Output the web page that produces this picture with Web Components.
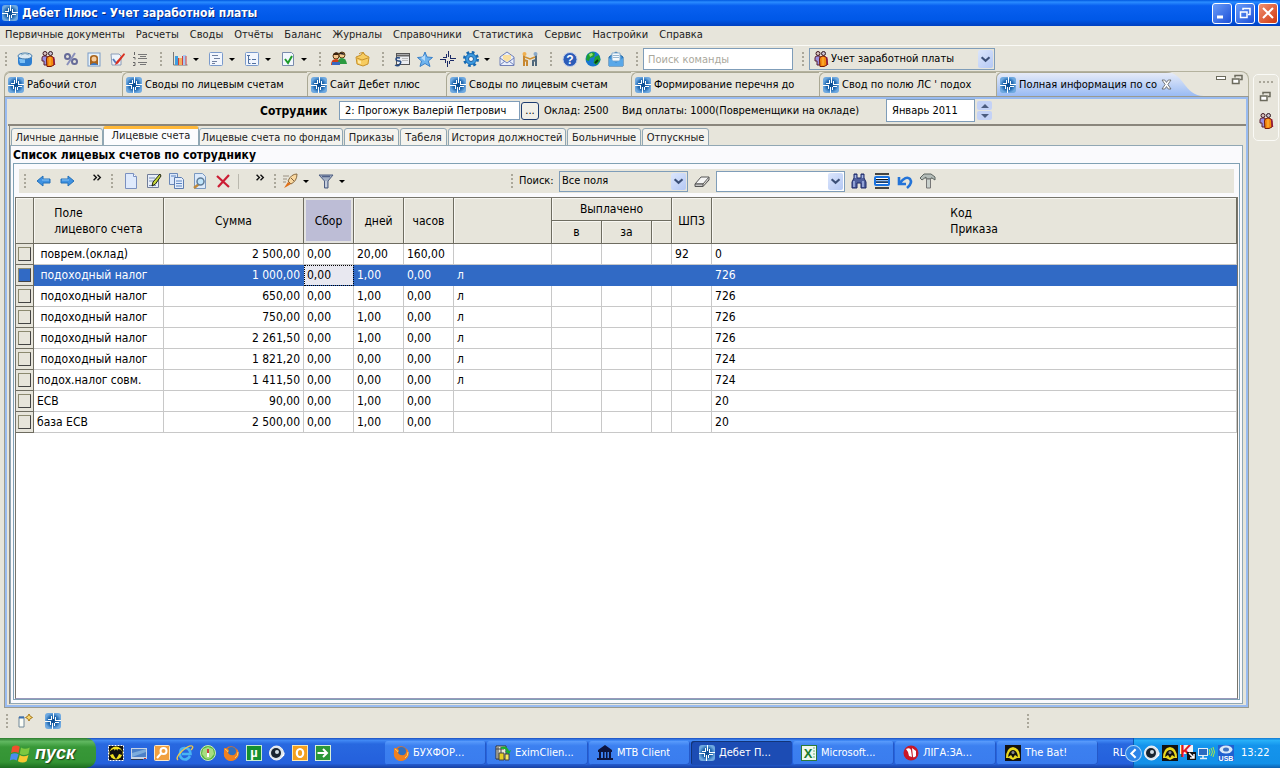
<!DOCTYPE html>
<html lang="ru">
<head>
<meta charset="utf-8">
<title>Дебет Плюс - Учет заработной платы</title>
<style>
  html, body { margin: 0; height: 100%; }
  body {
    --face: #e7e5db; --line: #7f9db9; --sel: #316ac5;
    font: 11px/14px "DejaVu Sans Condensed", "Noto Sans", sans-serif;
    color: #000; background: var(--face);
  }
</style>
</head>
<body>
<payroll-app></payroll-app>
<script>
const ICONS = {
  logo: '<defs><radialGradient id="g"><stop offset="0" stop-color="#0c4a8c"/><stop offset=".6" stop-color="#1f68b0"/><stop offset="1" stop-color="#6fa9e0"/></radialGradient></defs><rect width="16" height="16" rx="3" fill="url(#g)"/><path d="M0 8.5h6M3 6.5h4M6.5 3v4M8.5 0v6M10.5 4v4M10 7.5h6M10 9.5h4M9.5 10v3M7.5 10v6M5.5 9v3" stroke="#fff" fill="none"/>',
  mark: '<path d="M0 8.5h6M3 6.5h4M6.5 3v4M8.5 0v6M10.5 4v4M10 7.5h6M10 9.5h4M9.5 10v3M7.5 10v6M5.5 9v3" stroke="#1c2b66" fill="none"/>',
  jar: '<path d="M1 6h14v5q0 4-4 4H5q-4 0-4-4z" fill="#2d7fd2"/><path d="M2 8h6v4H3z" fill="#7cc0f5"/><ellipse cx="8" cy="5" rx="7" ry="3" fill="#dce9f2" stroke="#4a7fae"/><path d="M4 4q4-3 8 0" stroke="#8eb0c4" fill="none"/>',
  people: '<circle cx="5" cy="2.500" r="2" fill="#d8c4c0" stroke="#401820"/><circle cx="10.500" cy="2.500" r="2" fill="#c8c0d0" stroke="#301820"/><path d="M2 7q0-2 2-2h3v9H4v-4H2z" fill="#9a8ee0" stroke="#5a2030"/><path d="M6.500 8q0-3 3.500-3t4 3v6l-3 1.500H7z" fill="#f58a10" stroke="#7a1a08"/><path d="M13.500 6l1 8" stroke="#901840" stroke-width="1.500"/><path d="M10 6v8" stroke="#ffc040"/>',
  percent: '<circle cx="4.500" cy="5.500" r="2.500" fill="none" stroke="#666b98" stroke-width="2"/><circle cx="11.500" cy="10.500" r="2.500" fill="none" stroke="#666b98" stroke-width="2"/><path d="M12 2L4 14" stroke="#8a90bc" stroke-width="2"/>',
  photo: '<rect x="2" y="2" width="12" height="13" fill="#e8f3fb" stroke="#7a9cc8"/><path d="M4 14V7q0-3 4-3t4 3v7z" fill="#a8631c"/><circle cx="8" cy="8" r="2.500" fill="#f5cda0"/><path d="M4 14q4-4 8 0z" fill="#3878c8"/>',
  edit: '<path d="M2 3h8l2 2v9H3z" fill="#eef4fb" stroke="#8a9cb8"/><path d="M4 8l3 4" stroke="#5a7ab8" stroke-width="2"/><path d="M15 2L7 11l-1 3 3-1.500 7-9z" fill="#d83020"/>',
  numlist: '<path d="M6 3.500h9M6 7.500h9M6 11.500h9M8 5.500h6M8 13.500h6" stroke="#777"/><path d="M2.500 1v3M1 6.500h2v2M1 11.500h2v3H1" stroke="#666" fill="none"/>',
  chart: '<path d="M1.500 1v13h14" stroke="#777" fill="none"/><rect x="3" y="5" width="3" height="9" fill="#3f9fe0"/><rect x="7" y="7" width="3" height="7" fill="#f0b060"/><rect x="11" y="4" width="3" height="10" fill="#a8c8f0"/><path d="M6.500 7v7M10.500 5v9M14 5v9" stroke="#d04040"/>',
  form: '<rect x="1.500" y="1.500" width="13" height="13" rx="1" fill="#f2f6fd" stroke="#7a9acc"/><path d="M4 4.500h6M6 7.500h6M4 10.500h5M4 12.500h3" stroke="#7080a0"/>',
  tree: '<rect x="1.500" y="1.500" width="13" height="13" rx="1" fill="#f2f6fd" stroke="#7a9acc"/><path d="M3 4.500h3M8 8.500h4M8 12.500h4M4.500 5v7.500M4.500 8.500h2M4.500 12.500h2" stroke="#5070a0" fill="none"/>',
  check: '<path d="M2.500 1.500h9l2 2v11h-11z" fill="#f2f7fd" stroke="#7a8cac"/><path d="M5 8l3 4 4-7" stroke="#1d9a28" stroke-width="2" fill="none"/>',
  users: '<circle cx="5" cy="5" r="3" fill="#f3c68e" stroke="#5a3a10"/><path d="M2 4q1-4 6-2l-1 2z" fill="#3c2410"/><path d="M0 14q0-6 5-6t4 6z" fill="#d04018"/><circle cx="11" cy="4" r="3" fill="#f5cd90" stroke="#604010"/><path d="M8 3q3-4 6 1z" fill="#2c2020"/><path d="M7 12q0-5 4-5t5 6H7z" fill="#2c9a40"/><path d="M1 11h8v3H1z" fill="#3868c0"/>',
  bag: '<path d="M2 6l5-2 2-3 2 3 4 2-1 7-5 2-6-2z" fill="#f7cc60" stroke="#c8922c"/><path d="M3 7l5 2 6-2M5 3q3-3 6 1" stroke="#c8922c" fill="none"/><path d="M4 9l3 1v3l-3-1z" fill="#fde8a8"/>',
  console: '<rect x="2.500" y="2.500" width="13" height="11" fill="#eceef2" stroke="#555"/><path d="M3 4.500h12" stroke="#666" stroke-width="2"/><path d="M6 7q-4-1-4 1t3 2 1 3-5 1" stroke="#264a80" stroke-width="1.500" fill="none"/><path d="M8 7.500h6M8 9.500h6" stroke="#bbb"/>',
  star: '<path d="M8 1l2 5 5.500.5-4.200 3.500 1.700 5.500-5-3-5 3 1.500-5.500L.5 6.500 6 6z" fill="#6fb4ee" stroke="#3a80c8"/><path d="M8 4v6L4 7z" fill="#b8dcfa"/>',
  gear: '<circle cx="8" cy="8" r="6.500" fill="none" stroke="#1668b0" stroke-width="3" stroke-dasharray="2.600 2.500"/><circle cx="8" cy="8" r="5.500" fill="#3c9ae0" stroke="#1e70b8"/><circle cx="8" cy="8" r="2.500" fill="#f4f6f8" stroke="#1e60a0"/>',
  mail: '<path d="M1 6l7-5 7 5v8.500H1z" fill="#e9effc" stroke="#7080b8"/><path d="M4 4h8v4l-4 3-4-3z" fill="#fae0a0"/><path d="M1 7l7 5 7-5M1 14l5-4M15 14l-5-4" stroke="#7080b8" fill="none"/>',
  shake: '<path d="M2 4v11M2 9l3 1v5" stroke="#c88830" stroke-width="2" fill="none"/><circle cx="2.500" cy="3" r="2" fill="#f0b050"/><path d="M14 4v11M14 9l-3 1v5" stroke="#50687c" stroke-width="2" fill="none"/><circle cx="13.500" cy="3" r="2" fill="#88a8c8"/><path d="M3 6l5 2 5-2" stroke="#d09030" stroke-width="1.500" fill="none"/>',
  help: '<circle cx="8" cy="8.500" r="7" fill="#2c5cb8" stroke="#c0cce8"/><text x="8" y="13" text-anchor="middle" font-size="12" font-weight="bold" fill="#fff" font-family="Liberation Sans">?</text>',
  globe: '<circle cx="8" cy="8" r="7.500" fill="#1878d0"/><path d="M2 4q4-4 8-2l-1 4-4 1-1 3-3-1zM10 6l4-2 1.500 5-4 5-3-2z" fill="#1da030"/><path d="M4 3l3-1 1 2-3 2z" fill="#98e070"/><path d="M10 12l3-3" stroke="#0a3c10" stroke-width="2"/>',
  mailopen: '<path d="M1 6l7-5 7 5v9H1z" fill="#3c90d8" stroke="#2068a8"/><path d="M4 2h8v8H4z" fill="#f6fafd" stroke="#8ab0d0"/><path d="M5 4.500h6M5 6.500h6" stroke="#9ab8d0"/><path d="M1 7l7 5 7-5v8H1z" fill="#5aa8e8"/>',
  left: '<path d="M1 8l6-5v3h7v4H7v3z" fill="#3f92e2" stroke="#2470b8"/><path d="M6 7h7" stroke="#8cc4f4"/>',
  right: '<path d="M15 8L9 3v3H2v4h7v3z" fill="#3f92e2" stroke="#2470b8"/><path d="M3 7h7" stroke="#8cc4f4"/>',
  chev: '<path d="M1 3l5 5-5 5M8 3l5 5-5 5" stroke="#111" stroke-width="2.500" fill="none"/>',
  doc: '<path d="M2.500.5h8l3 3v12h-11z" fill="#dfeafc" stroke="#7a90c0"/><path d="M10.500.5v3h3" fill="#fff" stroke="#7a90c0"/>',
  docedit: '<path d="M1.500 1.500h11v13h-11z" fill="#e8effa" stroke="#707c98"/><path d="M3 5h6M3 8h5M3 12.500h7" stroke="#7c90b8"/><path d="M14 1L7 9l-1 4 3.500-2L15 3z" fill="#c6d838" stroke="#1c2010"/>',
  copy: '<path d="M.5.5h8v11h-8z" fill="#dce8fa" stroke="#6a88b8"/><path d="M5.500 4.500h7l2 2v9h-9z" fill="#e4eefc" stroke="#5c7cb0"/><path d="M2 3h5M7 8h6M7 10.500h6M7 13h6" stroke="#5c84c0"/>',
  docsearch: '<path d="M2.500.5h8l3 3v12h-11z" fill="#dceafb" stroke="#7a98c0"/><path d="M7 11l-5 4" stroke="#c08838" stroke-width="2.500"/><circle cx="8.500" cy="8.500" r="3.500" fill="#c0e4fa" stroke="#607c98" stroke-width="1.500"/>',
  del: '<path d="M2 3l12 11M14 2L3 14" stroke="#cc1c34" stroke-width="2.200"/>',
  rocket: '<path d="M1 3h6M1 6h4M1 9h3" stroke="#9a9080"/><path d="M15 1q-6 0-9 7l3 3q6-3 6-10z" fill="#f9d8a0" stroke="#8a6a40"/><path d="M9 5l3 3" stroke="#806040"/><path d="M6 9l-4 6 2-1 5-3z" fill="#e07018"/>',
  filter: '<path d="M1 2h14L10 8v7H6.500V8z" fill="#a4b0c4" stroke="#4c5c80"/><path d="M4 3.500h8" stroke="#506088" stroke-width="1.500"/><path d="M8 8v6" stroke="#e8ecf4"/>',
  eraser: '<path d="M1 11l6-7h8l-6 7z" fill="#f4f4f4" stroke="#555"/><path d="M1 11h8v2.500H1zM9 13.500L15 7V4" fill="#c4c4c4" stroke="#555"/>',
  bino: '<path d="M3 1h3v4h4V1h3v4l2 4v6h-5v-5H6v5H1V9l2-4z" fill="#50609c" stroke="#1c2868"/><path d="M3 8v6M12 8v6M4.500 2v3M11.500 2v3" stroke="#a8b8e8" stroke-width="1.500"/>',
  lines: '<path d="M1 1h14M1 15h14" stroke="#111" stroke-width="1.500"/><rect x="0" y="3" width="16" height="10" rx="2" fill="#1872e0"/><path d="M2 5.500h12M2 8h12M2 10.500h12" stroke="#fff" stroke-width="1.200"/><path d="M2 6.500h12M2 9h12" stroke="#111"/>',
  undo: '<path d="M2 4v7h7M2.500 10.500Q9 2 13 6q3 4-3 9" stroke="#2474d8" stroke-width="2.600" fill="none"/>',
  hammer: '<path d="M0 5l4-4h7l4 3v3l-3-2h-1v1H6V4L2 7z" fill="#b4bcb8" stroke="#5c6460"/><path d="M6.500 6h4v9h-4z" fill="#c8d0cc" stroke="#777"/>',
  flag: '<path d="M1 3q3-2 6 0L6 8Q3 6.500 0 8z" fill="#f0502c"/><path d="M8 3.500q3 2 7 0L14 8.500q-4 2-7 0z" fill="#7cc840"/><path d="M0 9q3-1.500 6 0l-1.500 5Q2 12.500-1 14z" fill="#4c8cf0"/><path d="M7 9.500q3 2 7 0l-1.500 5q-3 2-7 0z" fill="#f8c830"/>',
  batman: '<rect x=".5" y=".5" width="15" height="15" fill="#111" stroke="#fff" stroke-dasharray="2 1"/><ellipse cx="8" cy="8" rx="6.500" ry="6.500" fill="#f0e020"/><path d="M2 6q3-2 4-2l1 2V4l1 1 1-1v2l1-2q3 0 4 2v4l-3-1-1 2-2 3-2-3-1-2-3 1z" fill="#111"/>',
  desk: '<rect x="0" y="3" width="16" height="11" fill="#c8d4e4"/><rect x="1" y="4" width="14" height="8" fill="#4c80c8"/><path d="M1 12V8l14-4v3z" fill="#7cacdc"/><path d="M0 14.500h12" stroke="#283850"/><path d="M13 13.500h2" stroke="#c83828"/>',
  key: '<rect x=".5" y=".5" width="15" height="15" rx="1" fill="#f0a040" stroke="#fbe8c8"/><circle cx="9.500" cy="6" r="3" fill="none" stroke="#fff" stroke-width="2"/><path d="M7.500 8L3 13" stroke="#fff" stroke-width="2"/>',
  ie: '<path d="M13 11q-2 3.500-5 3.500-5 0-5-6T8 3q5 0 5.500 6H5" stroke="#48b4f4" stroke-width="2.600" fill="none"/><path d="M1 15Q-2 13 5 6q7-6 10-5 2 1-1 4" stroke="#f2c848" stroke-width="1.300" fill="none"/>',
  clover: '<circle cx="8" cy="8" r="7.500" fill="#58b840" stroke="#cce8c0"/><path d="M8 2l5 2 1 5-3 4-3 1-3-1-3-4 1-5z" fill="#a8dc80"/><path d="M8 4v4" stroke="#d04040" stroke-width="2"/><path d="M8 8v4" stroke="#fff" stroke-width="2"/>',
  fox: '<circle cx="8" cy="8.500" r="7.200" fill="#e8701c"/><circle cx="8.500" cy="6.500" r="4.600" fill="#3070c0"/><path d="M1 3q3 0 5 2l-1 3q2 3 6 2 3-2 3-6 3 4 1 8-3 4-7 4-5 0-7-5z" fill="#f08020"/><path d="M2 4q2 1 3 3M12 13q3-2 3-6" stroke="#ffd060" fill="none"/>',
  ut: '<rect x=".5" y=".5" width="15" height="15" fill="#149030" stroke="#c8ecd0"/><text x="8" y="12" text-anchor="middle" font-size="13" font-weight="bold" fill="#fff" font-family="Liberation Sans">µ</text>',
  eye: '<circle cx="7.500" cy="8" r="7" fill="#dce4ec" stroke="#f4f4f4"/><circle cx="7" cy="8" r="5" fill="#182430"/><circle cx="8" cy="7" r="2" fill="#d0dce4"/><path d="M12 12l3-1 1-4z" fill="#fff"/>',
  outlook: '<rect x=".5" y=".5" width="15" height="15" fill="#f4a020" stroke="#fde8b0"/><ellipse cx="8" cy="8" rx="3.200" ry="4" fill="none" stroke="#fff" stroke-width="2.200"/>',
  go: '<rect x=".5" y=".5" width="15" height="15" fill="#2c9838" stroke="#d8f0d8"/><path d="M2.500 8h9M8 4l4 4-4 4" stroke="#fff" stroke-width="2" fill="none"/>',
  exim: '<path d="M1 1h10v13H1z" fill="#e8e8d8" stroke="#333"/><path d="M1 4h8M3 2v12M6 2v12" stroke="#444"/><path d="M6 2q6-2 8 4l2-1-2 5-4-4h2q-2-3-6-2z" fill="#18b030"/><path d="M4 8h5v7H4z" fill="#e8d020" stroke="#444"/><path d="M10 9h4v6h-4z" fill="#f4e860" stroke="#444"/>',
  bank: '<path d="M8 0l7 5H1zM1 5h14v2H1zM2 7h2v6H2zM6 7h1.500v6H6zM9 7h1.500v6H9zM12 7h2v6h-2zM0 13h16v2H0z" fill="#0c1440"/>',
  excel: '<rect x=".5" y=".5" width="15" height="15" fill="#eef8ee" stroke="#2c7c38"/><text x="7" y="13" text-anchor="middle" font-size="13" font-weight="bold" fill="#1c7c2c" font-family="Liberation Sans">X</text><path d="M12 3h2M12 6h2M12 9h2M12 12h2" stroke="#6cb078"/>',
  liga: '<circle cx="8" cy="8" r="7.500" fill="#c81828"/><path d="M3 4q4-2 5 1l1 7-3-1-1-4zM9 3l4 3v5q-2 2-3 1z" fill="#fff"/>',
  bat: '<rect width="16" height="16" fill="#111"/><path d="M1 13Q1 3 8 2q7 1 7 11z" fill="#e8d820"/><path d="M3 12q1-7 5-7t5 7l-3-2-2 3-2-3z" fill="#111"/><circle cx="8" cy="7.500" r="1.500" fill="#888"/><path d="M4 13l4 2 4-2z" fill="#f0e020"/>',
  back: '<circle cx="8" cy="8" r="7.500" fill="#2c84e8" stroke="#a8d4f8"/><path d="M10 4L6 8l4 4" stroke="#fff" stroke-width="2" fill="none"/>',
  kasp: '<path d="M0 0h13v9H0z" fill="#f4f4f4"/><text x="6" y="12" text-anchor="middle" font-size="16" font-weight="bold" fill="#e01818" font-family="Liberation Sans">K</text><rect x="7" y="7" width="9" height="8" fill="#111"/><path d="M9 8l5 5M14 9v4h-4" stroke="#fff" stroke-width="1.500" fill="none"/>',
  net: '<rect x=".5" y="3.500" width="9" height="7" fill="#2c6cc0" stroke="#e8f0f8"/><path d="M5 11v2M2 13.500h7" stroke="#e8f0f8" stroke-width="1.500"/><path d="M11 4q2 3 0 6M13 3q3 4 0 8M15 2q3 5 0 10" stroke="#a0e850" fill="none"/>',
  usb: '<rect width="16" height="16" fill="#2060d0"/><ellipse cx="8" cy="4.500" rx="6.500" ry="4" fill="#d8e8f8"/><ellipse cx="8" cy="4.500" rx="3" ry="2" fill="#3c70c0"/><text x="8" y="16" text-anchor="middle" font-size="7" font-weight="bold" fill="#fff" font-family="Liberation Sans">USB</text>',
  restore: '<path d="M5 4.500V2.500h7v4h-2" fill="none" stroke="#6b6a5c" stroke-width="1.500"/><rect x="2.500" y="6" width="6.500" height="4.500" fill="#fff" stroke="#6b6a5c" stroke-width="1.500"/>',
  minview: '<rect x="3.500" y="3.500" width="9" height="3" fill="#fff" stroke="#6b6a5c"/>',
  winmin: '<path d="M3 12h6" stroke="#fff" stroke-width="3"/>',
  winres: '<path d="M6 5V3.500h7v6h-2M6 3.500h7" fill="none" stroke="#fff" stroke-width="1.500"/><rect x="3.500" y="7" width="6.500" height="5.500" fill="none" stroke="#fff" stroke-width="1.500"/>',
  winclose: '<path d="M3 3l10 10M13 3L3 13" stroke="#fff" stroke-width="2"/>',
  close: '<path d="M1.500 1.500h4L8 5l2.500-3.500h4L10 8l4.500 6.500h-4L8 11l-2.500 3.500h-4L6 8z" fill="#fff" stroke="#444"/>',
  down: '<path d="M3 6l4.500 4L12 6" fill="none" stroke="#3c5078" stroke-width="2.500"/>',
  newpersp: '<path d="M2 4h5v10H2z" fill="#fbfdf6" stroke="#708898"/><path d="M2 4.500h5" stroke="#3c70b0" stroke-width="2"/><path d="M12 1l1.200 2.200L15.500 4.500l-2.300 1.200L12 8l-1.200-2.300-2.300-1.200 2.300-1.300z" fill="#f8d870" stroke="#a87818"/>'
};

function define(name, html, setup) {
  const template = document.createElement('template');
  template.innerHTML = html;
  customElements.define(name, class extends HTMLElement {
    connectedCallback() {
      if (this.shadowRoot) return;
      const root = this.attachShadow({ mode: 'open' });
      root.append(template.content.cloneNode(true));
      if (setup) setup(this, root);
    }
  });
}

define('dp-icon', `
<style>
  :host { display: inline-block; flex: none; width: 16px; height: 16px; }
  :host([size="large"]) { width: 20px; height: 20px; }
  svg { display: block; width: 100%; height: 100%; overflow: visible; }
</style>
<svg viewBox="0 0 16 16" aria-hidden="true"></svg>`,
(el, root) => { root.querySelector('svg').innerHTML = ICONS[el.getAttribute('name')] || ''; });

define('tool-button', `
<style>
  :host { display: flex; flex: none; margin-right: 7px; }
  :host([menu]) { margin-right: 9px; }
  :host([last]) { margin-right: 12px; }
  button { display: flex; align-items: center; padding: 0; border: 0; background: none; }
  i { display: none; margin-left: 5px; border: solid transparent; border-width: 3px 3px 0; border-top-color: #000; }
  :host([menu]) i { display: block; }
</style>
<button type="button"><dp-icon></dp-icon><i></i></button>`,
(el, root) => {
  root.querySelector('button').setAttribute('aria-label', el.title || el.getAttribute('icon'));
  const made = document.createElement('dp-icon');
  made.setAttribute('name', el.getAttribute('icon'));
  root.querySelector('dp-icon').replaceWith(made);
});

define('tool-grip', `
<style>
  :host { flex: none; width: 2px; height: 15px; margin-right: 9px;
    background: repeating-linear-gradient(#aaa79a 0 2px, transparent 2px 4px); }
  :host([line]) { width: 1px; background: #bab8ae; }
</style>`);

define('combo-box', `
<style>
  :host { display: flex; align-items: center; box-sizing: border-box; height: 21px;
    border: 1px solid var(--line); background: var(--combo, #fff); }
  ::slotted(*) { flex: 1; min-width: 0; width: 0; align-self: stretch; padding: 0 2px; border: 0; margin: 0;
    appearance: none; background: none; color: inherit; font: inherit; outline: 0; }
  ::slotted(dp-icon) { flex: none; width: 16px; padding: 0; align-self: center; }
  .drop { display: flex; align-items: center; justify-content: center; width: 15px; align-self: stretch; margin: 1px;
    background: linear-gradient(135deg, #dce6fc, #b4c8f4); border-radius: 2px; }
  .drop dp-icon { width: 14px; height: 14px; }
</style>
<slot></slot><span class="drop"><dp-icon name="down"></dp-icon></span>`);

define('title-bar', `
<style>
  :host { display: flex; align-items: center; height: 26px; padding: 0 2px; flex: none; gap: 4px;
    color: #fff; font: bold 12px/16px "DejaVu Sans Condensed", sans-serif;
    background: linear-gradient(#0058e0, #2a8cff 8%, #0860f0 22%, #0058e8 75%, #0040c0); }
  h1 { flex: 1; margin: 0; font: inherit; text-shadow: 1px 1px #0a2a80; }
  button { display: grid; place-items: center; width: 20px; height: 21px; padding: 0; margin-left: -1px;
    border: 1px solid #fff; border-radius: 3px; background: linear-gradient(135deg, #6a9cf8, #1c50d8); }
  button.x { background: linear-gradient(135deg, #f09070, #d03810); }
</style>
<dp-icon name="logo"></dp-icon><h1><slot></slot></h1>
<button type="button" aria-label="Свернуть"><dp-icon name="winmin"></dp-icon></button>
<button type="button" aria-label="Восстановить"><dp-icon name="winres"></dp-icon></button>
<button type="button" class="x" aria-label="Закрыть"><dp-icon name="winclose"></dp-icon></button>`);

define('menu-bar', `
<style>
  :host { display: flex; flex: none; gap: 11px; padding: 2px 5px 3px; border-bottom: 1px solid #fafaf6; }
  ::slotted(a) { color: #222; text-decoration: none; }
</style><slot></slot>`);

define('main-toolbar', `
<style>
  :host { display: flex; flex: none; align-items: center; height: 26px; padding-left: 5px; }
  tool-grip { margin-right: 10px; }
  input { box-sizing: border-box; width: 150px; height: 22px; margin-right: 9px; padding: 0 4px; border: 1px solid var(--line);
    font: inherit; background: #fff; }
  input::placeholder { color: #aaa89c; opacity: 1; }
  combo-box { width: 186px; height: 22px; --combo: var(--face); padding-left: 3px; }
  tool-grip.tight { margin-right: 5px; }
</style>
<tool-grip></tool-grip>
<tool-button icon="jar"></tool-button><tool-button icon="people"></tool-button><tool-button icon="percent"></tool-button>
<tool-button icon="photo"></tool-button><tool-button icon="edit"></tool-button><tool-button last icon="numlist"></tool-button>
<tool-grip></tool-grip>
<tool-button menu icon="chart"></tool-button><tool-button menu icon="form"></tool-button><tool-button menu icon="tree"></tool-button><tool-button menu last icon="check"></tool-button>
<tool-grip></tool-grip>
<tool-button icon="users"></tool-button><tool-button last icon="bag"></tool-button>
<tool-grip></tool-grip>
<tool-button icon="console"></tool-button><tool-button icon="star"></tool-button><tool-button icon="mark"></tool-button>
<tool-button menu icon="gear"></tool-button><tool-button icon="mail"></tool-button><tool-button last icon="shake"></tool-button>
<tool-grip></tool-grip>
<tool-button icon="help"></tool-button><tool-button icon="globe"></tool-button><tool-button last icon="mailopen"></tool-button>
<tool-grip class="tight"></tool-grip>
<input type="search" placeholder="Поиск команды" aria-label="Поиск команды">
<tool-grip class="tight"></tool-grip>
<combo-box><dp-icon name="people"></dp-icon><select aria-label="Раздел"><option>Учет заработной платы</option></select></combo-box>`);

define('editor-tab', `
<style>
  :host { display: flex; flex: 0 0 auto; box-sizing: border-box; width: var(--w); }
  button { display: flex; align-items: center; gap: 3px; width: 100%; height: 24px; padding: 0 0 0 3px; text-align: left; white-space: nowrap;
    border: solid #aaa894; border-width: 1px 0 0 1px; border-radius: 6px 0 0; background: none; font: inherit; color: inherit; }
  span { flex: 1; }
  .x { display: none; width: 11px; height: 11px; margin-right: 32px; }
  :host([active]) button { background: linear-gradient(#e6ebf8, #99bbf4);
    clip-path: path("M0 0H170C188 0 188 24 208 24H0Z"); }
  :host([active]) .x { display: block; }
</style>
<button type="button" role="tab"><dp-icon name="logo"></dp-icon><span><slot></slot></span><dp-icon class="x" name="close"></dp-icon></button>`);

define('tab-strip', `
<style>
  :host { display: flex; align-items: flex-end; flex: none; height: 24px; border: solid #b4b29e; border-width: 1px 1px 0 0; border-radius: 6px 8px 0 0; margin-top: -1px; }
  .tabs { display: flex; flex: 1; min-width: 0; }
  .view { display: flex; gap: 1px; align-self: flex-start; padding: 1px 2px 0 0; }
  .view tool-button { margin: 0; }
</style>
<div class="tabs" role="tablist"><slot></slot></div>
<div class="view"><tool-button icon="minview"></tool-button><tool-button icon="restore"></tool-button></div>`);

define('employee-bar', `
<style>
  :host { display: flex; align-items: center; flex: none; box-sizing: border-box; height: 27px; padding: 0 0 2px 252px; white-space: nowrap; border-bottom: 2px solid #8a867c; }
  label { width: 79px; font: bold 12px/16px "DejaVu Sans Condensed", sans-serif; }
  input { box-sizing: border-box; height: 19px; padding: 0 5px; border: 1px solid var(--line); font: inherit; background: #fff; }
  #emp { width: 181px; margin-right: 1px; }
  .more { width: 18px; height: 18px; padding: 0; border: 1px solid #1c3c70; border-radius: 3px; background: #f0efe8; font: 11px/10px "DejaVu Sans Condensed", sans-serif; }
  .pay { width: 73px; margin: 0 5px; }
  .kind { width: 264px; }
  #month { width: 89px; height: 23px; margin-right: 2px; }
  .spin { display: grid; gap: 1px; }
  .spin button { display: grid; place-items: center; width: 15px; height: 9px; padding: 0; border: 0; border-radius: 2px; background: #c4d2f6; }
  i { border: solid transparent; border-width: 0 4px 4px; border-bottom-color: #4c5c80; }
  .dn i { border-width: 4px 4px 0; border-top-color: #4c5c80; }
</style>
<label for="emp">Сотрудник</label>
<input id="emp" value="2: Прогожук Валерій Петрович"><button type="button" class="more">...</button>
<span class="pay">Оклад: 2500</span><span class="kind">Вид оплаты: 1000(Повременщики на окладе)</span>
<input id="month" aria-label="Месяц" value="Январь 2011">
<div class="spin"><button type="button" aria-label="Больше"><i></i></button><button type="button" class="dn" aria-label="Меньше"><i></i></button></div>`);

define('page-tabs', `
<style>
  :host { display: flex; align-items: flex-end; flex: none; gap: 1px; height: 20px; padding-left: 1px; margin-bottom: -1px; }
  ::slotted(button) { box-sizing: border-box; width: var(--w); height: 18px; padding: 2px 0 0; border: 1px solid #91a7b4; border-radius: 3px 3px 0 0; background: #f4f3ee;
    font: inherit; color: #222; white-space: nowrap; }
  ::slotted(button[aria-selected="true"]) { height: 20px; margin: 0 -1px; padding: 0 0 3px; background: #fcfcfe; border-bottom: 0; border-top: 3px solid #ffb838; }
</style><slot></slot>`);

define('grid-toolbar', `
<style>
  :host { display: flex; flex: none; align-items: center; height: 24px; margin: 0 5px; padding-left: 5px; background: var(--face); white-space: nowrap; }
  .left { display: flex; align-items: center; width: 487px; }
  .over { width: 9px; height: 9px; align-self: flex-start; margin: 0 9px 0 11px; }
  label { width: 40px; }
  tool-grip { margin-right: 10px; }
  combo-box { width: 129px; margin-right: 6px; }
  .field { --combo: var(--face); }
  .near { margin-right: 6px; }
</style>
<div class="left">
<tool-grip></tool-grip><tool-button icon="left"></tool-button><tool-button icon="right"></tool-button>
<dp-icon class="over" name="chev"></dp-icon><tool-grip></tool-grip>
<tool-button icon="doc"></tool-button><tool-button icon="docedit"></tool-button><tool-button icon="copy"></tool-button>
<tool-button icon="docsearch"></tool-button><tool-button icon="del"></tool-button><tool-grip line class="near"></tool-grip>
<dp-icon class="over" name="chev"></dp-icon><tool-grip class="near"></tool-grip>
<tool-button menu icon="rocket"></tool-button><tool-button menu icon="filter"></tool-button>
</div>
<tool-grip class="near"></tool-grip>
<label for="field">Поиск:</label>
<combo-box class="field"><select id="field"><option>Все поля</option></select></combo-box>
<tool-button icon="eraser" class="near"></tool-button>
<combo-box><input aria-label="Текст поиска"></combo-box>
<tool-button icon="bino"></tool-button><tool-button icon="lines"></tool-button><tool-button icon="undo"></tool-button><tool-button icon="hammer"></tool-button>`);

const ROWS = [
  [' поврем.(оклад)', '2 500,00', '0,00', '20,00', '160,00', '', '92', '0'],
  [' подоходный налог', '1 000,00', '0,00', '1,00', '0,00', 'л', '', '726'],
  [' подоходный налог', '650,00', '0,00', '1,00', '0,00', 'л', '', '726'],
  [' подоходный налог', '750,00', '0,00', '1,00', '0,00', 'л', '', '726'],
  [' подоходный налог', '2 261,50', '0,00', '1,00', '0,00', 'л', '', '726'],
  [' подоходный налог', '1 821,20', '0,00', '0,00', '0,00', 'л', '', '724'],
  ['подох.налог совм.', '1 411,50', '0,00', '0,00', '0,00', 'л', '', '724'],
  ['ЕСВ', '90,00', '0,00', '1,00', '0,00', '', '', '20'],
  ['база ЕСВ', '2 500,00', '0,00', '1,00', '0,00', '', '', '20']
];

define('account-grid', `
<style>
  :host { display: block; flex: 1; min-height: 0; margin: 4px 1px 0; border: 1px solid #77756c; background: #fff; border-bottom-color: #9999bb; }
  table { width: 100%; table-layout: fixed; border-collapse: separate; border-spacing: 0; font-size: 12px; line-height: 16px; }
  th { font-weight: normal; padding: 0; background: var(--face); border: solid #6e6c60; border-width: 0 1px 1px 0; box-shadow: inset 1px 1px #f8f7f2; }
  th span { display: inline-block; text-align: left; vertical-align: middle; }
  thead tr { height: 23px; }
  th.on { background: #bdbdd6; box-shadow: inset 0 0 0 2px #e4e3e0; }
  td { height: 20px; padding: 0 3px; border: solid #c8c8c8; border-width: 0 1px 1px 0; white-space: pre; overflow: hidden; }
  td.n { text-align: right; }
  td.h { padding: 0; border-color: #6e6c60; background: var(--face); line-height: 0; text-align: center; }
  td.h input { appearance: none; box-sizing: border-box; width: 13px; height: 14px; margin: 0; border: 1px solid #8c8a70; border-right-color: #444; border-bottom-color: #444; background: var(--face); vertical-align: middle; }
  tr.sel td:not(.h) { background: var(--sel); color: #fff; border-color: var(--sel); }
  tr.sel td.h input { background: var(--sel); }
  tr.sel td.cur:not(.h) { background: #e8e8f0; color: #000; outline: 1px dotted #000; outline-offset: -1px; }
</style>
<table>
<colgroup><col style="width:18px"><col style="width:130px"><col style="width:140px"><col style="width:50px"><col style="width:50px"><col style="width:50px"><col style="width:98px"><col style="width:50px"><col style="width:50px"><col style="width:20px"><col style="width:40px"><col></colgroup>
<thead>
<tr><th rowspan="2"></th><th rowspan="2"><span>Поле<br>лицевого счета</span></th><th rowspan="2">Сумма</th><th rowspan="2" class="on">Сбор</th><th rowspan="2">дней</th><th rowspan="2">часов</th><th rowspan="2"></th><th colspan="3">Выплачено</th><th rowspan="2">ШПЗ</th><th rowspan="2"><span>Код<br>Приказа</span></th></tr>
<tr><th>в</th><th>за</th><th></th></tr>
</thead><tbody></tbody></table>`,
(el, root) => {
  root.querySelector('tbody').innerHTML = ROWS.map((r, i) => `<tr${i === 1 ? ' class="sel"' : ''}>
    <td class="h"><input type="checkbox" aria-label="Строка ${i + 1}"></td><td>${r[0]}</td><td class="n">${r[1]}</td><td${i === 1 ? ' class="cur"' : ''}>${r[2]}</td>
    <td>${r[3]}</td><td>${r[4]}</td><td>${r[5]}</td><td></td><td></td><td></td><td>${r[6]}</td><td>${r[7]}</td></tr>`).join('');
});

define('side-trim', `
<style>
  :host { display: flex; flex: none; flex-direction: column; align-items: center; align-self: flex-start; gap: 7px; box-sizing: border-box; width: 26px; height: 67px; margin: 2px 1px 0 4px;
    padding-top: 6px; border: 1px solid #fafaf6; border-radius: 5px; }
  .grip { width: 15px; height: 2px; background: repeating-linear-gradient(90deg, #aaa79a 0 2px, transparent 2px 4px); }
  tool-button { margin: 0; }
</style>
<div class="grip"></div><tool-button icon="restore"></tool-button><tool-button icon="people"></tool-button>`);

define('status-bar', `
<style>
  :host { display: flex; align-items: center; flex: none; height: 30px; padding: 0 0 4px 6px; box-sizing: border-box; }
  tool-button { margin-right: 12px; }
  .gap { flex: 1; }
  .rest { width: 242px; }
</style>
<tool-grip></tool-grip><tool-button icon="newpersp"></tool-button><tool-button icon="logo"></tool-button><div class="gap"></div><tool-grip></tool-grip><div class="rest"></div>`);

define('task-button', `
<style>
  :host { display: flex; flex: 0 1 101px; min-width: 0; }
  button { display: flex; align-items: center; gap: 4px; width: 100%; height: 24px; padding: 0 4px 0 8px; border: 0; border-radius: 3px;
    background: linear-gradient(#5a9cfc, #3c80f0 20%, #3a7cee); box-shadow: inset -1px -1px #2458c8; color: #fff; font: inherit; white-space: nowrap; }
  :host([active]) button { background: #1c4cb4; box-shadow: inset 1px 1px #123478; }
  span { overflow: hidden; }
</style><button type="button"><slot name="icon"></slot><span><slot></slot></span></button>`);

define('task-bar', `
<style>
  :host { display: flex; align-items: center; flex: none; height: 30px; color: #fff;
    background: linear-gradient(#1c50c0, #4088f4 8%, #2868e0 20%, #2460dc 85%, #1840a0); }
  .start { display: flex; align-items: center; gap: 4px; align-self: stretch; width: 96px; padding: 0 0 0 11px; border: 0; border-radius: 0 10px 10px 0; color: #fff;
    font: italic bold 18px/22px "Liberation Sans", sans-serif; text-shadow: 1px 1px 1px #1c4018;
    background: linear-gradient(#2c7c30, #60b860 12%, #389838 30%, #349434 80%, #1c6c20); }
  .quick { display: flex; gap: 7px; width: 277px; padding-left: 12px; }
  .tasks { display: flex; flex: 1; gap: 1px; min-width: 0; }
  .lang { width: 28px; text-align: center; flex: none; }
  .tray { display: flex; align-items: center; gap: 2px; flex: none; align-self: stretch; box-sizing: border-box; width: 147px;
    background: linear-gradient(#1478d0, #28b0f8 8%, #1494ec 25%, #1290e8 85%, #0c60b0); border-left: 1px solid #0c58b0; }
  .tray dp-icon:first-child { margin-left: -9px; width: 17px; height: 17px; }
  .tray .net { margin-right: 2px; }
  time { margin-left: 5px; }
</style>
<button type="button" class="start"><dp-icon size="large" name="flag"></dp-icon>пуск</button>
<div class="quick"><dp-icon name="batman"></dp-icon><dp-icon name="desk"></dp-icon><dp-icon name="key"></dp-icon><dp-icon name="ie"></dp-icon><dp-icon name="clover"></dp-icon><dp-icon name="fox"></dp-icon><dp-icon name="ut"></dp-icon><dp-icon name="eye"></dp-icon><dp-icon name="outlook"></dp-icon><dp-icon name="go"></dp-icon></div>
<div class="tasks"><slot></slot></div>
<div class="lang">RL</div>
<div class="tray"><dp-icon name="back"></dp-icon><dp-icon name="eye"></dp-icon><dp-icon name="bat"></dp-icon><dp-icon name="kasp"></dp-icon><dp-icon class="net" name="net"></dp-icon><dp-icon name="usb"></dp-icon><time>13:22</time></div>`);

define('payroll-app', `
<style>
  :host { display: flex; flex-direction: column; min-height: 100vh; }
  .work { display: flex; flex: 1; min-height: 0; }
  .editor { display: flex; flex-direction: column; flex: 1; min-width: 0; margin-left: 4px; }
  .frame { display: flex; flex-direction: column; flex: 1; border: 1px solid #9a9a90; box-shadow: inset 0 0 0 2px #99bbf0; padding: 2px 2px 3px 3px; }
  .sheet { display: flex; flex-direction: column; flex: 1; margin: 0 3px 0 1px; border-left: 1px solid #8a867c; }
  .page { display: flex; flex-direction: column; flex: 1; border: 1px solid #91a7b4; background: #fafafd; padding: 0 2px 3px; }
  h2 { margin: 0; padding: 1px 0 0; font: bold 12px/16px "DejaVu Sans Condensed", sans-serif; }
  .group { display: flex; flex-direction: column; flex: 1; border: 1px solid #7fa0b4; padding-top: 5px; }
</style>
<title-bar>Дебет Плюс - Учет заработной платы</title-bar>
<menu-bar><a href="#">Первичные документы</a><a href="#">Расчеты</a><a href="#">Своды</a><a href="#">Отчёты</a><a href="#">Баланс</a><a href="#">Журналы</a><a href="#">Справочники</a><a href="#">Статистика</a><a href="#">Сервис</a><a href="#">Настройки</a><a href="#">Справка</a></menu-bar>
<main-toolbar></main-toolbar>
<div class="work">
<main class="editor">
<tab-strip>
<editor-tab style="--w:118px">Рабочий стол</editor-tab><editor-tab style="--w:185px">Своды по лицевым счетам</editor-tab><editor-tab style="--w:139px">Сайт Дебет плюс</editor-tab><editor-tab style="--w:185px">Своды по лицевым счетам</editor-tab><editor-tab style="--w:188px">Формирование перечня до</editor-tab><editor-tab style="--w:177px">Свод по полю ЛС ' подох</editor-tab><editor-tab active style="--w:208px">Полная информация по со</editor-tab>
</tab-strip>
<div class="frame">
<employee-bar></employee-bar>
<div class="sheet">
<page-tabs>
<button type="button" role="tab" style="--w:92px">Личные данные</button><button type="button" role="tab" aria-selected="true" style="--w:96px">Лицевые счета</button><button type="button" role="tab" style="--w:144px">Лицевые счета по фондам</button><button type="button" role="tab" style="--w:55px">Приказы</button><button type="button" role="tab" style="--w:47px">Табеля</button><button type="button" role="tab" style="--w:118px">История должностей</button><button type="button" role="tab" style="--w:74px">Больничные</button><button type="button" role="tab" style="--w:67px">Отпускные</button>
</page-tabs>
<section class="page">
<h2>Список лицевых счетов по сотруднику</h2>
<div class="group"><grid-toolbar></grid-toolbar><account-grid></account-grid></div>
</section>
</div>
</div>
</main>
<side-trim></side-trim>
</div>
<status-bar></status-bar>
<task-bar>
<task-button><dp-icon slot="icon" name="fox"></dp-icon>БУХФОР...</task-button><task-button><dp-icon slot="icon" name="exim"></dp-icon>EximClien...</task-button><task-button><dp-icon slot="icon" name="bank"></dp-icon>MTB Client</task-button><task-button active><dp-icon slot="icon" name="logo"></dp-icon>Дебет П...</task-button><task-button><dp-icon slot="icon" name="excel"></dp-icon>Microsoft...</task-button><task-button><dp-icon slot="icon" name="liga"></dp-icon>ЛІГА:ЗА...</task-button><task-button><dp-icon slot="icon" name="bat"></dp-icon>The Bat!</task-button>
</task-bar>`);
</script>
</body>
</html>
